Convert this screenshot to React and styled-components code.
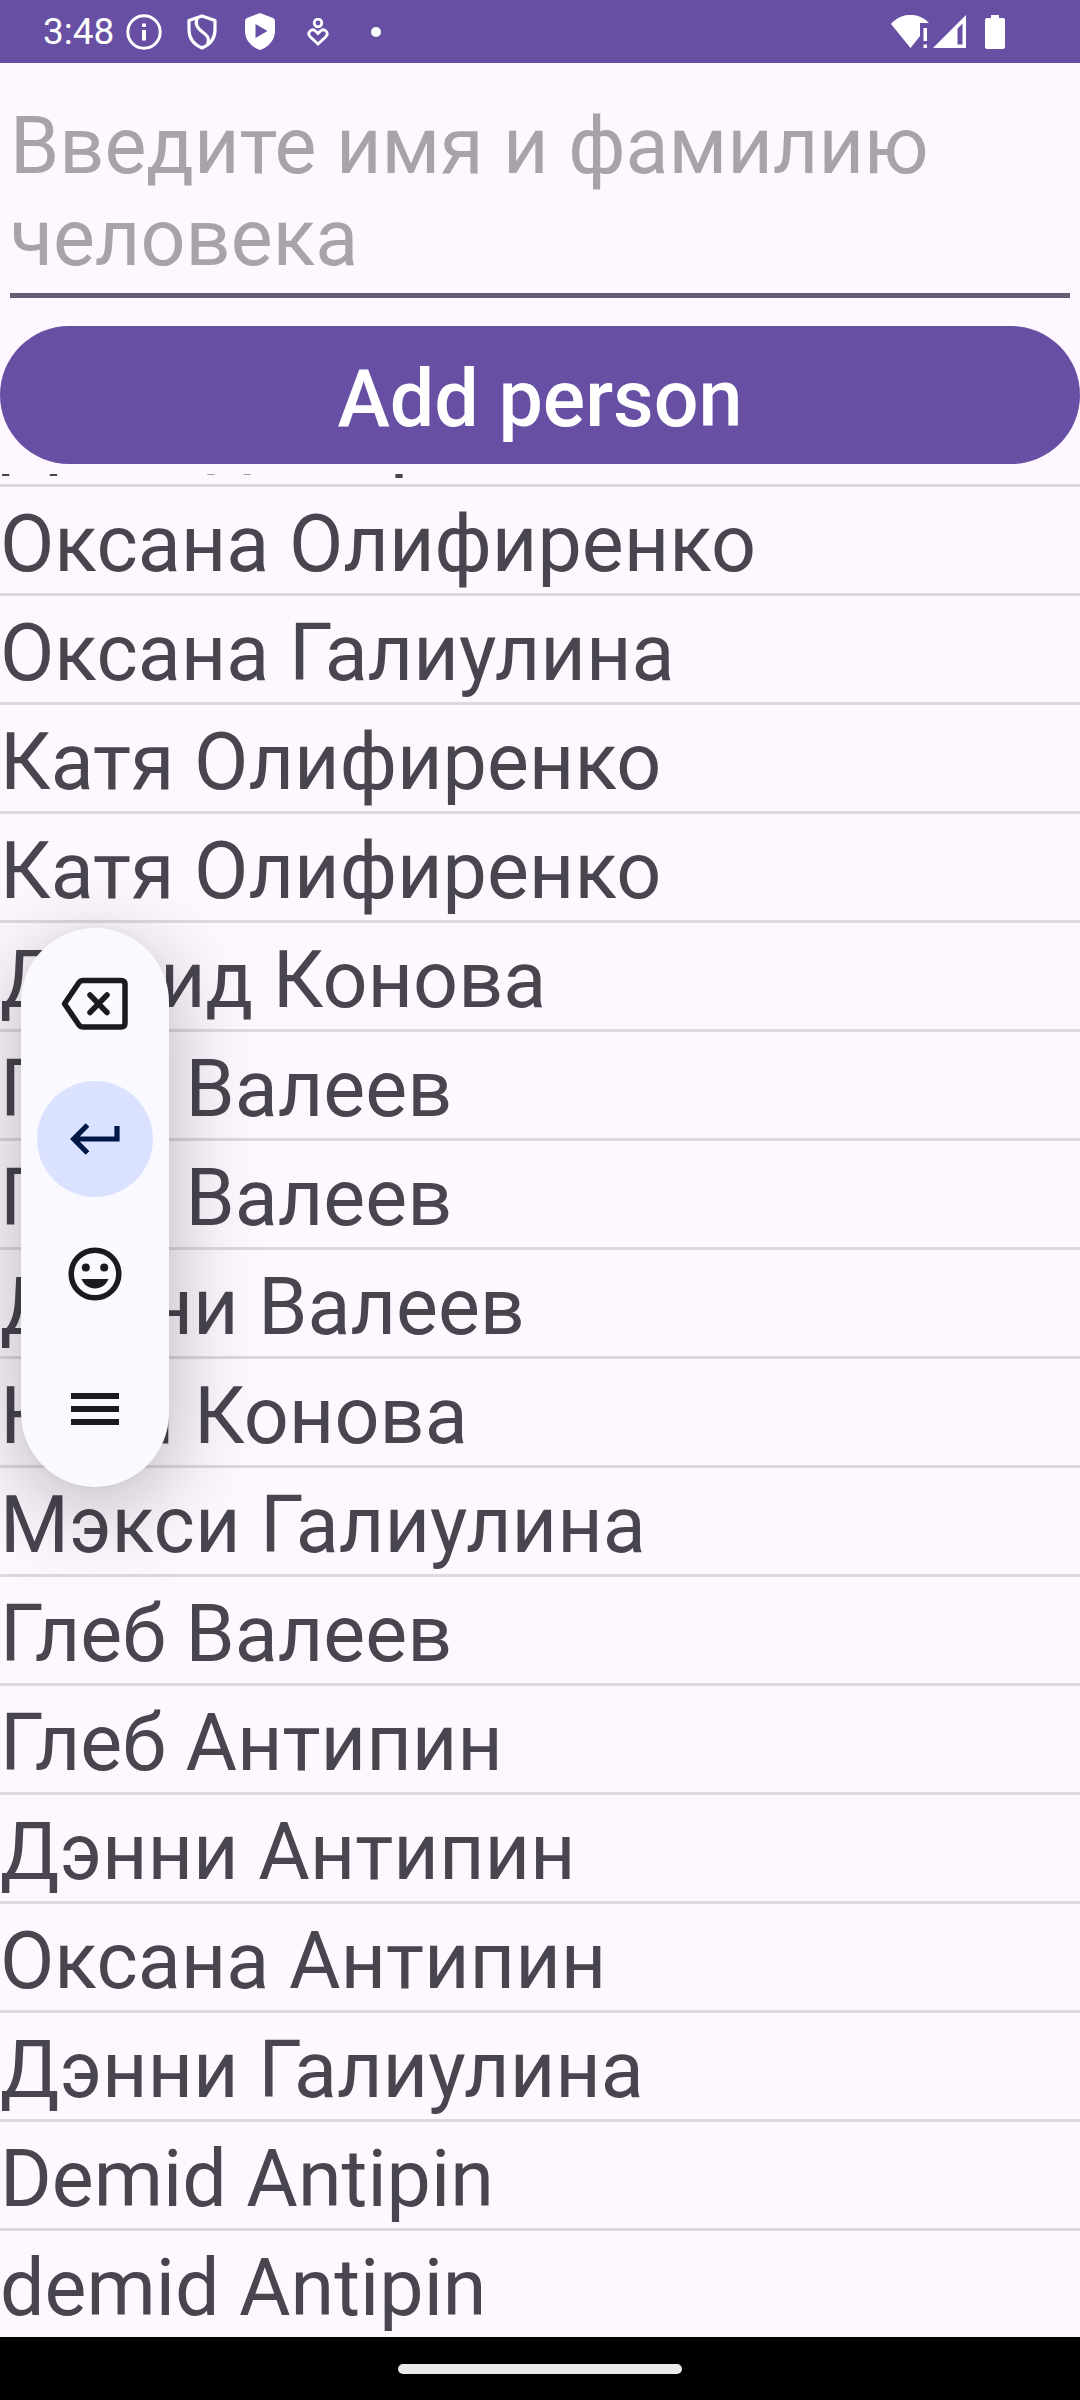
import React from "react";
import styled, { createGlobalStyle } from "styled-components";

const GlobalStyle = createGlobalStyle`
  *, *::before, *::after { box-sizing: border-box; }
  html, body, #root { margin: 0; height: 100%; }
  body { background: #fef7ff; font-family: Roboto, "Noto Sans", sans-serif; }
`;

const Screen = styled.div`
  position: relative;
  display: flex;
  flex-direction: column;
  height: 100vh;
  background: #fef7ff;
`;

const StatusBar = styled.header`
  display: flex;
  justify-content: space-between;
  align-items: center;
  flex: none;
  height: 63px;
  padding: 0 75px 0 43px;
  background: #6750a4;
  color: #fff;
`;

const StatusGroup = styled.div`
  display: flex;
  align-items: center;
  gap: ${({ $gap }) => $gap}px;
`;

const Clock = styled.time`
  font-size: 37px;
  line-height: 44px;
`;

const Glyph = styled.svg`
  display: block;
  flex: none;
  width: ${({ $w }) => $w}px;
  height: ${({ $h }) => $h}px;
`;

const Form = styled.form`
  display: flex;
  flex-direction: column;
  flex: none;
  gap: 28px;
  padding: 37px 0 10px;
`;

const NameField = styled.textarea`
  display: block;
  margin: 0 10px;
  padding: 0 0 9px;
  border: 0;
  border-bottom: 5px solid #645b74;
  border-radius: 0;
  outline: 0;
  resize: none;
  overflow: hidden;
  background: transparent;
  color: #49454f;
  font: 400 79px/92px Roboto, "Noto Sans", sans-serif;

  &::placeholder {
    color: #a8a3a9;
    opacity: 1;
  }
`;

const AddButton = styled.button`
  height: 138px;
  padding: 8px 0 0;
  border: 0;
  border-radius: 69px;
  background: #6750a4;
  color: #fff;
  font: 500 79px/92px Roboto, "Noto Sans", sans-serif;
`;

const ListViewport = styled.main`
  display: flex;
  flex-direction: column;
  justify-content: flex-end;
  flex: 1;
  min-height: 0;
  overflow: hidden;
`;

const People = styled.ul`
  flex: none;
  margin: 0;
  padding: 0;
  list-style: none;
`;

const Person = styled.li`
  padding-top: 8px;
  border-bottom: 3px solid #ded8e0;
  color: #49454f;
  font-size: 79px;
  line-height: 98px;
  white-space: nowrap;

  &:last-child { border-bottom: 0; }
`;

const KeyboardPill = styled.div`
  position: absolute;
  top: 928px;
  left: 21px;
  display: flex;
  flex-direction: column;
  align-items: center;
  gap: 19px;
  padding: 18px 16px 20px;
  border-radius: 74px;
  background: #f9f9ff;
  box-shadow: 0 20px 90px rgba(0, 0, 0, 0.28), 0 0 12px rgba(0, 0, 0, 0.03);
`;

const PillButton = styled.button`
  display: grid;
  place-items: center;
  width: 116px;
  height: 116px;
  padding: 0;
  border: 0;
  border-radius: 50%;
  background: ${({ $active }) => ($active ? "#dae2ff" : "transparent")};
  color: ${({ $active }) => ($active ? "#001848" : "#1a1b20")};
`;

const NavigationBar = styled.footer`
  display: flex;
  justify-content: center;
  align-items: center;
  flex: none;
  height: 63px;
  background: #000;
`;

const HomeHandle = styled.span`
  width: 284px;
  height: 10px;
  border-radius: 5px;
  background: #ebebeb;
`;

const people = [
  "Демид Шарипов",
  "Оксана Олифиренко",
  "Оксана Галиулина",
  "Катя Олифиренко",
  "Катя Олифиренко",
  "Демид Конова",
  "Глеб Валеев",
  "Глеб Валеев",
  "Дэнни Валеев",
  "Катя Конова",
  "Мэкси Галиулина",
  "Глеб Валеев",
  "Глеб Антипин",
  "Дэнни Антипин",
  "Оксана Антипин",
  "Дэнни Галиулина",
  "Demid Antipin",
  "demid Antipin",
];

function InfoIcon() {
  return (
    <Glyph $w={36} $h={36} viewBox="0 0 36 36" fill="none" aria-hidden="true">
      <circle cx="18" cy="18" r="16.2" stroke="#fff" strokeWidth="3" />
      <path d="M16 16h4v10.500h-4zM16 9.500h4v3.500h-4z" fill="#fff" />
    </Glyph>
  );
}

function ShieldOutlineIcon() {
  return (
    <Glyph $w={30} $h={36} viewBox="0 0 30 36" fill="none" stroke="#fff" strokeWidth="3.200" strokeLinejoin="round" aria-hidden="true">
      <path d="M15 2 28 6.500V16c0 8-5 14.500-13 18C7 30.500 2 24 2 16V6.500z" />
      <path d="M10 4.500c-2 6 0 9 5.500 13.500 6 4.500 7 7 5 12" />
    </Glyph>
  );
}

function ShieldPlayIcon() {
  return (
    <Glyph $w={30} $h={37} viewBox="0 0 30 37" aria-hidden="true">
      <path fill="#fff" fillRule="evenodd" d="M15 0 28 5q2 .8 2 3v10c0 8.500-6 16-15 19C6 34 0 26.500 0 18V8q0-2.200 2-3zM10.500 11v14L22.500 18z" />
    </Glyph>
  );
}

function CareIcon() {
  return (
    <Glyph $w={30} $h={28} viewBox="-4 0 30 28" fill="none" stroke="#fff" strokeWidth="2.800" aria-hidden="true">
      <circle cx="11" cy="5" r="3.800" />
      <path d="M11 26 3 18.500C-.5 14 5 10 8.500 13L11 15.500 13.500 13C17 10 22.500 14 19 18.500z" />
    </Glyph>
  );
}

function DotIcon() {
  return (
    <Glyph $w={10} $h={10} viewBox="0 0 10 10" aria-hidden="true">
      <circle cx="5" cy="5" r="5" fill="#fff" />
    </Glyph>
  );
}

function WifiAlertIcon() {
  return (
    <Glyph $w={38} $h={33} viewBox="0 0 38 33" fill="#fff" aria-hidden="true">
      <path d="M0 9C10-3 28-3 38 8H29V21L19.500 33z" />
      <path d="M32.500 13h3.500v13h-3.500zM32.500 29.500h3.500V33h-3.500z" />
    </Glyph>
  );
}

function SignalIcon() {
  return (
    <Glyph $w={33} $h={33} viewBox="0 0 33 33" aria-hidden="true">
      <path fill="#fff" fillRule="evenodd" d="M33 0V33H0zM29.500 8.500 24.500 13.500V29.500H29.500z" />
    </Glyph>
  );
}

function BatteryIcon() {
  return (
    <Glyph $w={20} $h={34} viewBox="0 0 20 34" aria-hidden="true">
      <path fill="#fff" d="M6 0h8v3h4q2 0 2 2v27q0 2-2 2H2q-2 0-2-2V5q0-2 2-2h4z" />
    </Glyph>
  );
}

function BackspaceIcon() {
  return (
    <Glyph $w={68} $h={54} viewBox="0 0 68 54" fill="none" stroke="currentColor" strokeWidth="5.500" aria-hidden="true">
      <path strokeLinejoin="round" d="M21.500 3.500H60Q64 3.500 64 7.500V46Q64 50 60 50H21.500Q19.500 50 18 48L3.500 26.750 18 5.500Q19.500 3.500 21.500 3.500z" />
      <path strokeLinecap="round" d="M29 18 46 35.500M46 18 29 35.500" />
    </Glyph>
  );
}

function EnterIcon() {
  return (
    <Glyph $w={50} $h={32} viewBox="0 0 50 32" fill="none" stroke="currentColor" strokeWidth="5.200" aria-hidden="true">
      <path d="M47 3V16H4M17.500 2 3.700 16 17.500 30" />
    </Glyph>
  );
}

function SmileIcon() {
  return (
    <Glyph $w={54} $h={54} viewBox="0 0 54 54" fill="currentColor" aria-hidden="true">
      <circle cx="27" cy="27" r="23.800" fill="none" stroke="currentColor" strokeWidth="5.500" />
      <circle cx="17.800" cy="20.500" r="4" />
      <circle cx="36.200" cy="20.500" r="4" />
      <path d="M13.500 32h27C38 38 33 41.500 27 41.500S16 38 13.500 32z" />
    </Glyph>
  );
}

function MenuIcon() {
  return (
    <Glyph $w={48} $h={34} viewBox="0 0 48 34" fill="currentColor" aria-hidden="true">
      <path d="M0 1h48v6H0zM0 14h48v6H0zM0 27h48v6H0z" />
    </Glyph>
  );
}

export default function App() {
  return (
    <Screen>
      <GlobalStyle />
      <StatusBar>
        <StatusGroup $gap={25}>
          <StatusGroup $gap={12}>
            <Clock>3:48</Clock>
            <InfoIcon />
          </StatusGroup>
          <StatusGroup $gap={28}>
            <ShieldOutlineIcon />
            <ShieldPlayIcon />
            <StatusGroup $gap={38}>
              <CareIcon />
              <DotIcon />
            </StatusGroup>
          </StatusGroup>
        </StatusGroup>
        <StatusGroup $gap={19}>
          <StatusGroup $gap={4}>
            <WifiAlertIcon />
            <SignalIcon />
          </StatusGroup>
          <BatteryIcon />
        </StatusGroup>
      </StatusBar>
      <Form onSubmit={(event) => event.preventDefault()}>
        <NameField
          rows={2}
          aria-label="Введите имя и фамилию человека"
          placeholder="Введите имя и фамилию человека"
        />
        <AddButton type="submit">Add person</AddButton>
      </Form>
      <ListViewport>
        <People>
          {people.map((name, index) => (
            <Person key={index}>{name}</Person>
          ))}
        </People>
      </ListViewport>
      <KeyboardPill role="toolbar" aria-label="Keyboard">
        <PillButton type="button" aria-label="Backspace"><BackspaceIcon /></PillButton>
        <PillButton type="button" aria-label="Enter" $active><EnterIcon /></PillButton>
        <PillButton type="button" aria-label="Emoji"><SmileIcon /></PillButton>
        <PillButton type="button" aria-label="Menu"><MenuIcon /></PillButton>
      </KeyboardPill>
      <NavigationBar>
        <HomeHandle />
      </NavigationBar>
    </Screen>
  );
}
